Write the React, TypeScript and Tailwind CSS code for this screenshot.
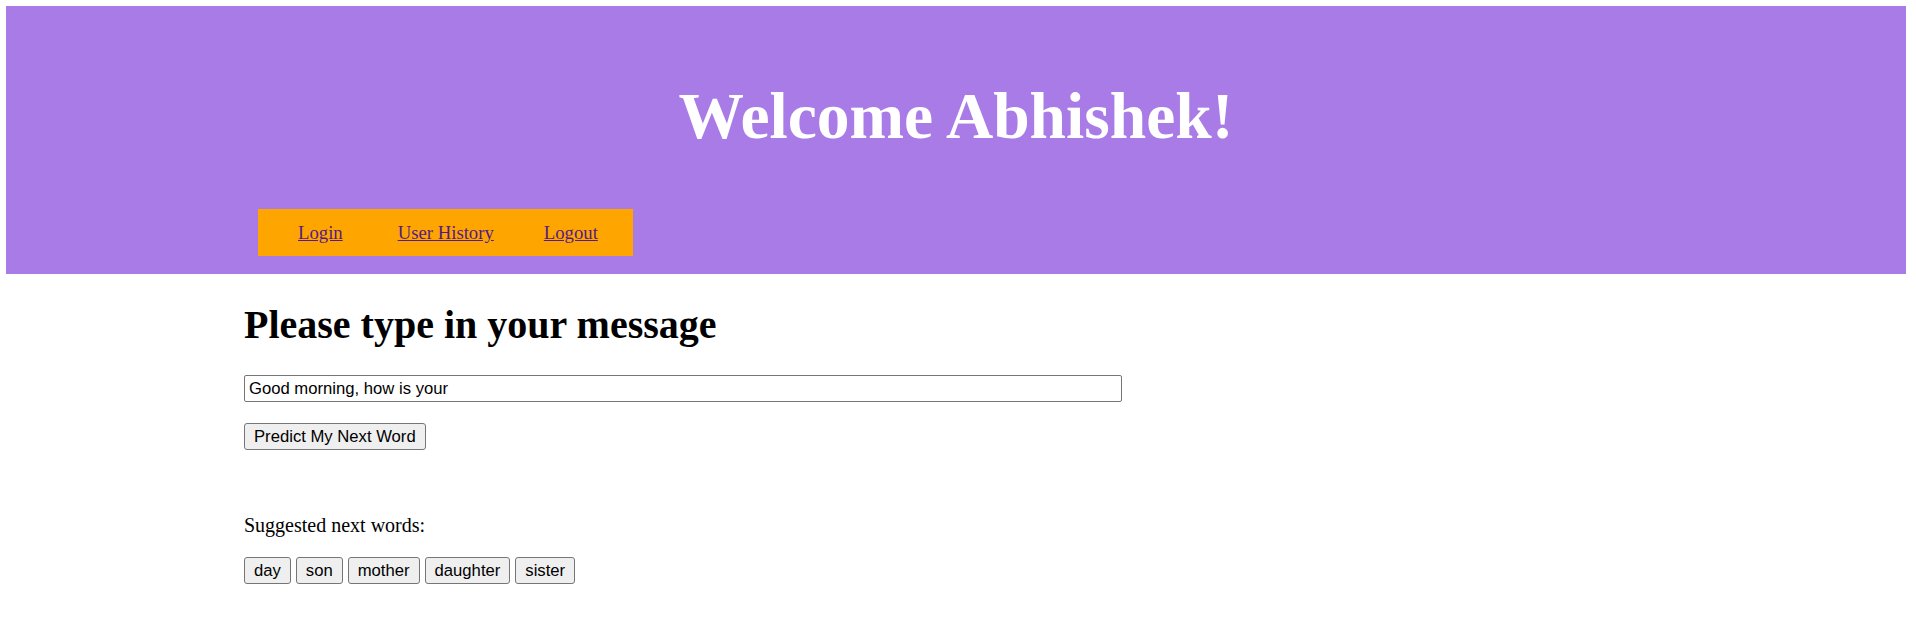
import React from "react";

const serif = { fontFamily: '"Liberation Serif", "Times New Roman", serif' };

function Btn({ children }: { children: React.ReactNode }) {
  return (
    <button
      type="button"
      className="border border-[#767676] bg-[#efefef] rounded-[3px] px-[9px] py-[3px] text-[16.67px] leading-[19px] text-black font-['Liberation_Sans',Arial,sans-serif]"
    >
      {children}
    </button>
  );
}

export default function App() {
  const words = ["day", "son", "mother", "daughter", "sister"];
  return (
    <div className="bg-white min-h-[636px] pt-[6px]" style={serif}>
      <header className="ml-[6px] mr-[10px] bg-[#a87be7] pt-[73px] pb-[18px]">
        <h1 className="text-center text-white font-bold text-[65.5px] leading-[75px]">
          Welcome Abhishek!
        </h1>
        <nav className="mt-[55px] ml-[252px] w-[375px] bg-[#ffa500] flex py-[13px] text-[18.72px] leading-[21px]">
          <a href="#" className="ml-[40px] text-[#551a8b] underline">Login</a>
          <a href="#" className="ml-[55px] text-[#551a8b] underline">User History</a>
          <a href="#" className="ml-[50px] text-[#551a8b] underline">Logout</a>
        </nav>
      </header>
      <main className="pl-[244px] pt-[28px]">
        <h2 className="text-[40px] font-bold leading-[46px] text-black">
          Please type in your message
        </h2>
        <input
          type="text"
          defaultValue="Good morning, how is your"
          className="mt-[27px] block w-[878px] h-[27px] border border-[#767676] rounded-[2px] px-[4px] text-[16.67px] text-black font-['Liberation_Sans',Arial,sans-serif] outline-none"
        />
        <div className="mt-[21px]">
          <Btn>Predict My Next Word</Btn>
        </div>
        <p className="mt-[64px] text-[20px] leading-[23px] text-black">Suggested next words:</p>
        <div className="mt-[20px] flex gap-[5px]">
          {words.map((w) => (
            <Btn key={w}>{w}</Btn>
          ))}
        </div>
      </main>
    </div>
  );
}
